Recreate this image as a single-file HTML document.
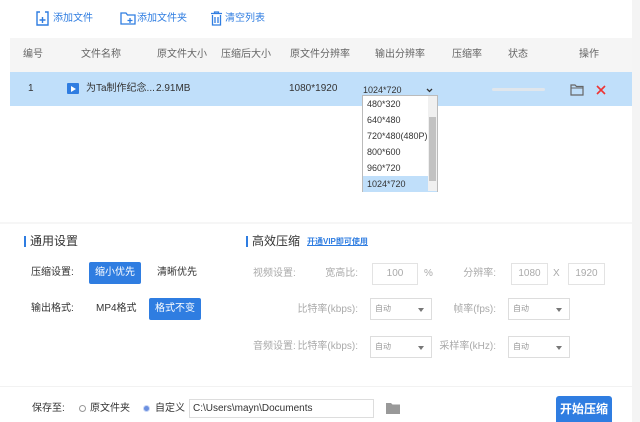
<!DOCTYPE html>
<html><head><meta charset="utf-8"><style>
*{margin:0;padding:0;box-sizing:border-box}
body{width:640px;height:422px;overflow:hidden;background:#fff;font-family:"Liberation Sans","Noto Sans CJK SC",sans-serif;font-size:10px;line-height:12px;color:#333;position:relative}
.a{position:absolute;white-space:nowrap}
.hd{color:#666;font-size:10px}
.blue{color:#2f7de1}
.g{color:#aaa}
.box{position:absolute;border:1px solid #e3e3e3;background:#fff;height:22px;line-height:20px;text-align:center;color:#aaa;font-size:10px}
.sel{position:absolute;border:1px solid #ddd;height:22px;width:62px;line-height:20px;color:#999;font-size:8px;padding-left:4px}
.sel:after{content:"";position:absolute;right:7px;top:9px;border:3px solid transparent;border-top:4px solid #777}
.dd div{height:16px;line-height:16px;padding-left:4px;font-size:9px;color:#333}
</style></head><body>
<div class="a" style="right:0;top:0;width:8px;height:422px;background:#f4f4f4"></div>
<!-- toolbar -->
<svg class="a" style="left:36px;top:11px" width="13" height="15" viewBox="0 0 13 15"><path d="M4 1H1v13h11V1H9" fill="none" stroke="#2f7de1" stroke-width="1.4"/><path d="M6.5 6v6M3.5 9h6" stroke="#2f7de1" stroke-width="1.4"/></svg>
<div class="a blue" style="left:53px;top:13px">添加文件</div>
<svg class="a" style="left:120px;top:12px" width="16" height="13" viewBox="0 0 16 13"><path d="M1 12V1h5l1.5 2H15v9z" fill="none" stroke="#2f7de1" stroke-width="1.3"/><path d="M10 6v5M7.5 8.5h5" stroke="#2f7de1" stroke-width="1.3"/></svg>
<div class="a blue" style="left:137px;top:13px">添加文件夹</div>
<svg class="a" style="left:210px;top:11px" width="13" height="15" viewBox="0 0 13 15"><path d="M1 2.5h11M4.5 2.5V1h4v1.5M2.5 4v10h8V4M5 6v6M8 6v6" fill="none" stroke="#2f7de1" stroke-width="1.3"/></svg>
<div class="a blue" style="left:225px;top:13px">清空列表</div>
<!-- header -->
<div class="a" style="left:10px;top:38px;width:622px;height:34px;background:#f5f5f5"></div>
<div class="a hd" style="left:23px;top:49px">编号</div>
<div class="a hd" style="left:81px;top:49px">文件名称</div>
<div class="a hd" style="left:157px;top:49px">原文件大小</div>
<div class="a hd" style="left:221px;top:49px">压缩后大小</div>
<div class="a hd" style="left:290px;top:49px">原文件分辨率</div>
<div class="a hd" style="left:375px;top:49px">输出分辨率</div>
<div class="a hd" style="left:452px;top:49px">压缩率</div>
<div class="a hd" style="left:508px;top:49px">状态</div>
<div class="a hd" style="left:579px;top:49px">操作</div>
<!-- row -->
<div class="a" style="left:10px;top:72px;width:622px;height:34px;background:#c0dffa"></div>
<div class="a" style="left:28px;top:83px">1</div>
<div class="a" style="left:67px;top:83px;width:12px;height:11px;background:#2f7de1;border-radius:1px"></div>
<div class="a" style="left:71px;top:86px;border:3px solid transparent;border-left:5px solid #fff;width:0;height:0"></div>
<div class="a" style="left:86px;top:83px">为Ta制作纪念...</div>
<div class="a" style="left:156px;top:83px">2.91MB</div>
<div class="a" style="left:289px;top:83px">1080*1920</div>
<div class="a" style="left:363px;top:84px;font-size:9px">1024*720</div>
<svg class="a" style="left:426px;top:88px" width="7" height="5"><path d="M1 1l2.5 2.5L6 1" stroke="#333" stroke-width="1.3" fill="none"/></svg>
<div class="a" style="left:492px;top:88px;width:53px;height:3px;background:#e0e6ec;border-radius:2px"></div>
<svg class="a" style="left:570px;top:84px" width="14" height="12" viewBox="0 0 14 12"><path d="M1 11V1h4l1.5 1.5H13V11z" fill="none" stroke="#666" stroke-width="1.2"/><path d="M1 4h12" stroke="#666"/></svg>
<svg class="a" style="left:596px;top:85px" width="10" height="10"><path d="M1 1l8 8M9 1l-8 8" stroke="#e33" stroke-width="1.6"/></svg>
<!-- dropdown -->
<div class="a dd" style="left:362px;top:95px;width:76px;height:97px;border:1px solid #bbb;background:#fff">
<div>480*320</div><div>640*480</div><div>720*480(480P)</div><div>800*600</div><div>960*720</div><div style="background:#c0dffa">1024*720</div>
<div class="a" style="left:65px;top:0;width:9px;height:95px;background:#f0f0f0"></div>
<div class="a" style="left:66px;top:21px;width:7px;height:64px;background:#c2c2c2"></div>
</div>
<div class="a" style="left:0;top:222px;width:632px;height:2px;background:#f6f6f6"></div>
<!-- general settings -->
<div class="a" style="left:24px;top:236px;width:2px;height:11px;background:#2f7de1"></div>
<div class="a" style="left:30px;top:234px;font-size:12px;line-height:14px">通用设置</div>
<div class="a" style="left:31px;top:267px">压缩设置:</div>
<div class="a" style="left:89px;top:262px;width:52px;height:22px;background:#2f7de1;color:#fff;border-radius:2px;text-align:center;line-height:22px">缩小优先</div>
<div class="a" style="left:157px;top:267px">清晰优先</div>
<div class="a" style="left:31px;top:303px">输出格式:</div>
<div class="a" style="left:96px;top:303px">MP4格式</div>
<div class="a" style="left:149px;top:298px;width:52px;height:22px;background:#2f7de1;color:#fff;border-radius:2px;text-align:center;line-height:22px">格式不变</div>
<!-- advanced -->
<div class="a" style="left:246px;top:236px;width:2px;height:11px;background:#2f7de1"></div>
<div class="a" style="left:252px;top:234px;font-size:12px;line-height:14px">高效压缩</div>
<div class="a blue" style="left:307px;top:236px;font-size:8px;text-decoration:underline;font-weight:bold">开通VIP即可使用</div>
<div class="a g" style="left:253px;top:268px">视频设置:</div>
<div class="a g" style="right:282px;top:268px">宽高比:</div>
<div class="box" style="left:372px;top:263px;width:46px">100</div>
<div class="a g" style="left:424px;top:268px">%</div>
<div class="a g" style="right:144px;top:268px">分辨率:</div>
<div class="box" style="left:511px;top:263px;width:37px">1080</div>
<div class="a g" style="left:553px;top:268px">X</div>
<div class="box" style="left:568px;top:263px;width:37px">1920</div>
<div class="a g" style="right:282px;top:304px">比特率(kbps):</div>
<div class="sel" style="left:370px;top:298px">自动</div>
<div class="a g" style="right:144px;top:304px">帧率(fps):</div>
<div class="sel" style="left:508px;top:298px">自动</div>
<div class="a g" style="left:253px;top:341px">音频设置:</div>
<div class="a g" style="right:282px;top:341px">比特率(kbps):</div>
<div class="sel" style="left:370px;top:336px">自动</div>
<div class="a g" style="right:144px;top:341px">采样率(kHz):</div>
<div class="sel" style="left:508px;top:336px">自动</div>
<!-- bottom -->
<div class="a" style="left:0;top:386px;width:632px;height:1px;background:#f2f2f2"></div>
<div class="a" style="left:32px;top:403px">保存至:</div>
<div class="a" style="left:79px;top:405px;width:7px;height:7px;border:1px solid #999;border-radius:50%"></div>
<div class="a" style="left:90px;top:403px">原文件夹</div>
<div class="a" style="left:143px;top:405px;width:7px;height:7px;background:#6b8fe0;border:1px solid #c8d6f5;border-radius:50%"></div>
<div class="a" style="left:155px;top:403px">自定义</div>
<div class="a" style="left:189px;top:399px;width:185px;height:19px;border:1px solid #ddd;padding-left:3px;line-height:17px">C:\Users\mayn\Documents</div>
<svg class="a" style="left:386px;top:402px" width="14" height="12"><path d="M0 12V1h5l1.5 1.5H14V12z" fill="#999"/></svg>
<div class="a" style="left:556px;top:396px;width:56px;height:26px;background:#2f7de1;color:#fff;border-radius:3px 3px 0 0;text-align:center;line-height:26px;font-size:12px;font-weight:bold">开始压缩</div>
</body></html>
